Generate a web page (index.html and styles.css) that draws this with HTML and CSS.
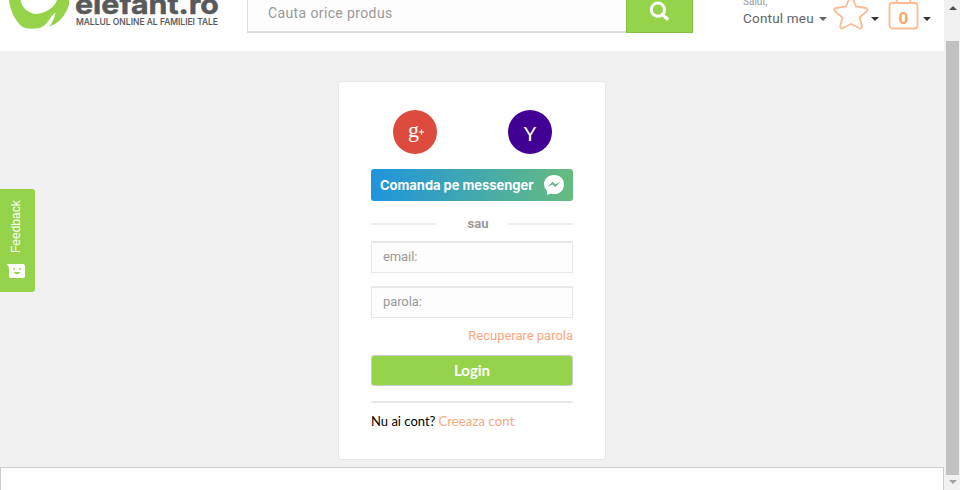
FILE: index.html
```html
<!DOCTYPE html>
<html lang="ro">
<head>
<meta charset="utf-8">
<title>elefant.ro</title>
<link rel="stylesheet" href="styles.css">
</head>
<body>
<div class="window">
  <div class="page">
    <header class="header">
      <svg class="logo" width="230" height="51" viewBox="0 0 230 51">
        <path d="M9 0C10 11 16 22 22 26.500Q27 30 40 28Q46 25 49 20Q52 15 55.500 12.500Q54 21 49 26.500Q61 23 67 10Q70 4 69 0H57Q55 6 48.500 10Q42 14 34 14Q22 10 20.500 0Z" fill="#95d44a"/>
        <text class="logo-name" x="75" y="14" textLength="144" lengthAdjust="spacingAndGlyphs">elefant.ro</text>
        <text class="logo-tagline" x="76" y="24.500" textLength="142" lengthAdjust="spacingAndGlyphs">MALLUL ONLINE AL FAMILIEI TALE</text>
      </svg>
      <div class="search">
        <div class="search-field">Cauta orice produs</div>
        <div class="search-button">
          <svg width="22" height="22" viewBox="0 0 22 22"><circle cx="8.900" cy="9.700" r="6.600" fill="none" stroke="#fff" stroke-width="3"/><path d="M13.500 14.500l5.600 5.200" stroke="#fff" stroke-width="3.400"/></svg>
        </div>
      </div>
      <div class="account">
        <div class="hello">Salut,</div>
        <div class="account-name"><span>Contul meu</span><i class="caret caret-soft"></i></div>
      </div>
      <div class="favourites">
        <svg width="36" height="32" viewBox="0 0 36 32"><path d="M15.700 0Q18 -6 20.300 0L23 6.500L33 8Q36 9 33.500 11.500L26.500 17.500L29 26Q29 29.500 26 28L18 24L10 28Q7 29.500 7.300 26L9.500 17.500L2.200 11.500Q0 9 3 8L13 6.500Z" fill="none" stroke="#fcbb93" stroke-width="1.800"/></svg>
        <i class="caret"></i>
      </div>
      <div class="cart">
        <svg width="31" height="31" viewBox="0 0 31 31"><rect x="1.500" y="3" width="28" height="25.500" rx="3" fill="none" stroke="#fcbb93" stroke-width="1.800"/><path d="M8.500 3Q8.500 -5 15.500 -5T22.500 3" fill="none" stroke="#fcbb93" stroke-width="1.800"/><text class="cart-count" x="15.500" y="24" text-anchor="middle">0</text></svg>
        <i class="caret"></i>
      </div>
    </header>

    <main class="main">
      <section class="card">
        <div class="social">
          <svg width="44" height="44" viewBox="0 0 44 44"><circle cx="22" cy="22" r="22" fill="#dc4b3e"/><text class="google" x="15" y="27">g</text><path d="M26 22h5M28.500 19.500v5" stroke="#fff" stroke-width="1.200"/></svg>
          <svg width="44" height="44" viewBox="0 0 44 44"><circle cx="22" cy="22" r="22" fill="#410093"/><text class="yahoo" x="22" y="31" text-anchor="middle">Y</text></svg>
        </div>
        <a class="messenger"><span>Comanda pe messenger</span>
          <svg width="22" height="22" viewBox="0 0 22 22"><path d="M11 1C5.200 1 1 5 1 10.400Q1 14 4 17L4 21L8 19.400Q9.500 20 11 20C17 20 21 16 21 10.400S17 1 11 1Z" fill="#fff"/><path d="M4.500 13L9.500 7.700L12.300 10.300L17.500 7.700L12.300 13L9.500 10.600Z" fill="#60b78b"/></svg>
        </a>
        <div class="divider"><span>sau</span></div>
        <div class="field">email:</div>
        <div class="field">parola:</div>
        <a class="recover"><span>Recuperare parola</span></a>
        <div class="login"><span>Login</span></div>
        <div class="register"><span class="question">Nu ai cont?</span><a class="create">Creeaza cont</a></div>
      </section>
    </main>
    <footer class="footer"></footer>
  </div>
  <div class="scrollbar"><i class="arrow-up"></i><div class="thumb"></div><i class="arrow-down"></i></div>
  <div class="feedback">
    <span>Feedback</span>
    <svg width="19" height="15" viewBox="0 0 19 15"><path d="M0 0H16Q18 0 18 2V12Q18 14 16 14H4Q2 14 2 12V4Z" fill="#fff"/><path d="M7 4v2M13 4v2" stroke="#95d44a" stroke-width="1.300"/><path d="M6.500 8H13.500Q10 12.500 6.500 8Z" fill="#95d44a"/></svg>
  </div>
</div>
</body>
</html>
```
FILE: styles.css
```css
* { box-sizing: border-box; }
body {
  margin: 0;
  font-family: "Inter", "Liberation Sans", sans-serif;
  font-size: 13px;
  overflow: hidden;
}
.window { display: flex; width: 960px; height: 490px; position: relative; }
.page { width: 944px; display: flex; flex-direction: column; background: #f1f1f1; }
.header { height: 51px; display: flex; background: #fff; overflow: hidden; }
.logo { flex: none; margin-right: 17px; }
.logo-name { font: 700 27px "Inter", sans-serif; fill: #58595b; stroke: #58595b; stroke-width: .5px; }
.logo-tagline { font: 500 9.5px "Inter", sans-serif; fill: #58595b; stroke: #58595b; stroke-width: .15px; }
.search { display: flex; width: 446px; height: 33px; }
.search-field {
  width: 379px;
  padding: 3px 0 0 20px;
  border: solid #ddd;
  border-width: 0 0 2px 1px;
  background: #fdfdfd;
  color: #999;
  font: 14px/20px "Roboto", sans-serif;
  letter-spacing: .38px;
}
.search-button {
  width: 67px;
  padding-left: 22px;
  border: solid #86bf42;
  border-width: 0 1px 1px;
  background: #95d44a;
}
.account { width: 84px; margin-left: 50px; color: #636466; }
.hello { height: 9px; margin-top: -3px; font: 10px/10px "Roboto", sans-serif; color: #999; }
.account-name { display: flex; align-items: center; justify-content: space-between; font: 13.5px/25px "Roboto", sans-serif; letter-spacing: .2px; white-space: nowrap; }
.caret { border: solid transparent; border-width: 4px 4px 0; border-top-color: #333; }
.caret-soft { border-top-color: #636466; }
.favourites, .cart { display: flex; height: 38px; align-items: flex-start; }
.favourites { margin-left: 6px; gap: 2px; }
.cart { margin-left: 9px; gap: 4px; }
.favourites .caret, .cart .caret { margin-top: 17px; }
.cart-count { font: 700 17px "Roboto", sans-serif; fill: #fca36d; }

.main { height: 416px; padding: 30px 0 0; display: flex; justify-content: center; align-items: flex-start; }
.card {
  width: 268px;
  height: 379px;
  padding: 28px 32px 0;
  border: 1px solid #e8e8e8;
  border-radius: 3px;
  background: #fff;
}
.social { display: flex; justify-content: space-between; padding: 0 21px 0 22px; height: 59px; }
.google { font: 22px "Liberation Serif", serif; fill: #fff; }
.yahoo { font: 20px "Lato", sans-serif; fill: #fff; }
.messenger {
  display: flex;
  align-items: center;
  justify-content: space-between;
  height: 32px;
  padding: 0 8px 0 9px;
  border-radius: 3px;
  background: linear-gradient(90deg, #1e94dd, #66bc80);
  color: #fff;
  font-weight: 700;
  letter-spacing: -.04px;
  white-space: nowrap;
}
.divider { display: flex; align-items: center; height: 40px; padding-top: 5px; color: #999; font: 700 13px "Roboto", sans-serif; }
.divider span { flex: 1; padding-left: 12px; text-align: center; }
.divider::before, .divider::after { content: ""; width: 65px; height: 2px; background: #eee; }
.field {
  height: 32px;
  margin-bottom: 13px;
  padding-left: 11px;
  border: solid #e8e8e8;
  border-width: 2px 1px 1px;
  background: #fdfdfd;
  color: #999;
  font: 13px/27px "Roboto", sans-serif;
  letter-spacing: -.1px;
}
.recover { display: block; height: 24px; text-align: right; color: #fca77a; font: 13px/10px "Roboto", sans-serif; letter-spacing: -.02px; }
.login { height: 31px; border: 1px solid #ccc; border-radius: 3px; background: #95d44a; color: #fff; text-align: center; font: 700 15px/28px "Lato", sans-serif; }
.register { display: flex; gap: 3px; margin-top: 15px; padding-top: 9px; border-top: 2px solid #e8e8e8; font: 13px/18px "Lato", sans-serif; color: #000; white-space: nowrap; }
.create { color: #fca77a; letter-spacing: .15px; }
.footer { height: 23px; border: solid #ccc; border-width: 1px 1px 0; background: #fff; }

.scrollbar { width: 16px; padding-left: 1px; display: flex; flex-direction: column; align-items: center; background: #f1f1f1; }
.thumb { width: 13px; height: 434px; margin-top: 31px; background: #c1c1c1; }
.arrow-up, .arrow-down { border: solid transparent; }
.arrow-up { margin-top: 6px; border-width: 0 4px 4px; border-bottom-color: #505050; }
.arrow-down { margin-top: 5px; border-width: 4px 4px 0; border-top-color: #a3a3a3; }
.feedback {
  position: absolute;
  left: 0;
  top: 189px;
  width: 35px;
  height: 103px;
  padding: 11px 0 0 7px;
  display: flex;
  flex-direction: column;
  gap: 11px;
  border-radius: 0 3px 3px 0;
  background: #95d44a;
  color: #fff;
}
.feedback span { height: 53px; writing-mode: vertical-rl; transform: rotate(180deg); font: 12px/18px "Liberation Sans", sans-serif; }
```
